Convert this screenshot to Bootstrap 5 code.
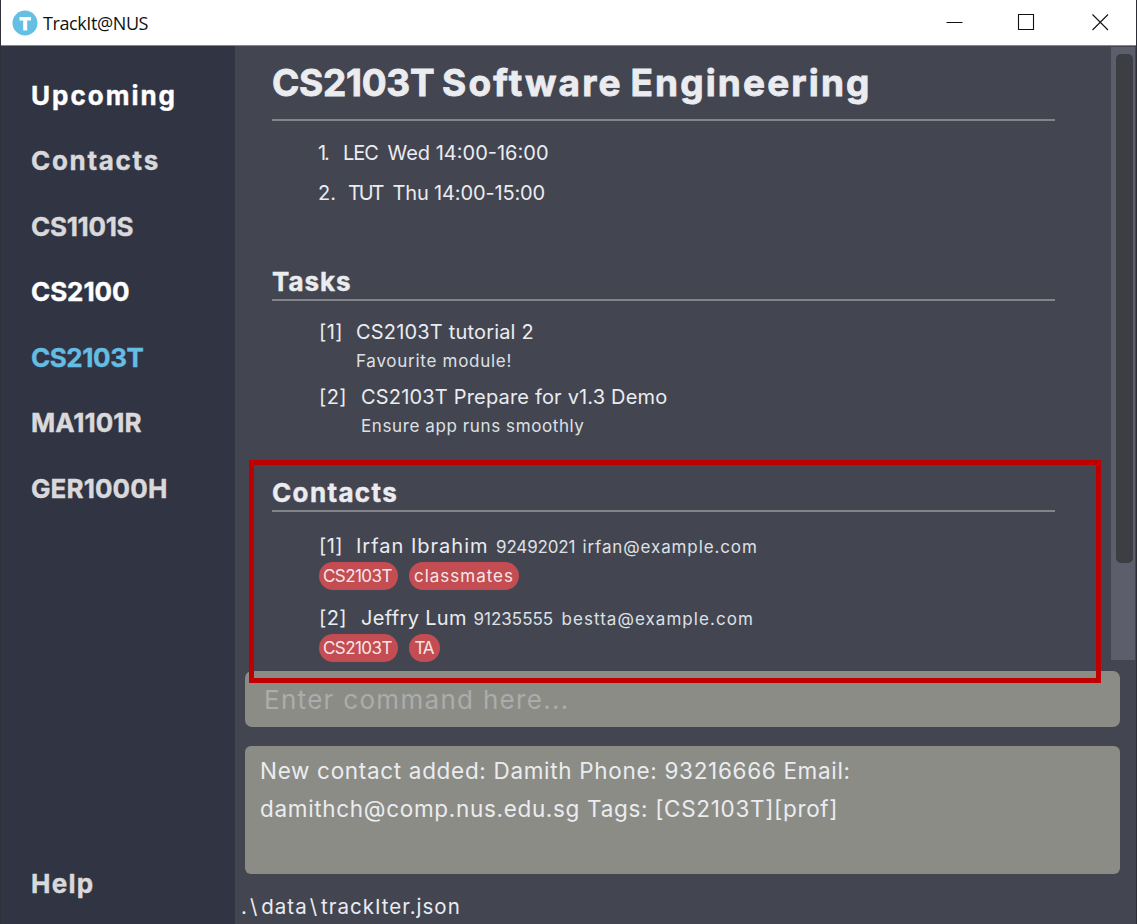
<!DOCTYPE html>
<html lang="en">
<head>
<meta charset="utf-8">
<title>TrackIt@NUS</title>
<link rel="stylesheet" href="https://cdn.jsdelivr.net/npm/bootstrap@5.3.0/dist/css/bootstrap.min.css">
<style>
  body { font-family: Inter, "Open Sans", sans-serif; font-size: 20px; line-height: 30px; color: #ebecf0; background: #434651; white-space: nowrap; }
  .win { height: 924px; border-left: 1px solid #30323b; border-right: 1px solid #2c2d36; }
  .titlebar { height: 46px; background: #fff; color: #111; border-bottom: 1px solid #85868c; padding-left: 11px; }
  .titlebar .app-name { font: 18px/30px "Open Sans", sans-serif; letter-spacing: -.4px; margin-left: 5px; }
  .side { width: 234px; background: #313442; padding: 16.5px 0 8px 30px; font-size: 26px; font-weight: 700; -webkit-text-stroke: .4px; }
  .side a { color: #d9d9db; text-decoration: none; display: block; height: 65.5px; line-height: 66px; }
  .side a.lit { color: #fff; }
  .side a.current { color: #64bde3; }
  .scroller { height: 614px; }
  .content-col { width: 783px; margin-left: 37px; }
  .rule { border-bottom: 2px solid #82848a; }
  h1.rule { font-size: 37px; font-weight: 700; line-height: 71px; height: 75px; padding-top: 1px; word-spacing: -1px; -webkit-text-stroke: .8px; }
  h2.rule { font-size: 26px; font-weight: 700; line-height: 35px; height: 37px; -webkit-text-stroke: .4px; }
  .lessons { padding: 12px 0 0 46px; height: 143px; }
  .lessons > div { height: 39.5px; line-height: 40px; }
  .entries { padding-left: 46px; }
  .task { height: 65px; position: static; }
  .minor { font-size: 17px; line-height: 28px; color: #dfe0e4; }
  .contact { height: 72px; }
  .idx1 { width: 38px; } .idx2 { width: 43px; } .num1 { width: 25px; } .num2 { width: 30px; } .kind { width: 44.5px; }
  .idx1, .idx2 { letter-spacing: .4px; padding-left: 1px; text-indent: 0; }
  .name1 { width: 140px; letter-spacing: 1px; } .name2 { width: 112.5px; letter-spacing: .34px; }
  .phone1 { width: 86.5px; letter-spacing: -.15px; } .phone2 { width: 88px; }
  .pill { height: 28px; border-radius: 14px; background: #c34d52; font-size: 17px; line-height: 29px; color: #f6e7e7; padding-left: 4px; }
  .pill-row { gap: 11px; margin-left: 1px; }
  .pill-code { width: 79px; letter-spacing: -.56px; }
  .pill-class { width: 110px; padding-left: 5px; letter-spacing: .99px; }
  .pill-ta { width: 31px; padding-left: 5.5px; letter-spacing: -1.3px; }
  .contact-line { height: 29px; line-height: 29px; margin-bottom: 1px; }
  .track { width: 24px; height: 613px; background: #5d5e6b; margin: 1px 1px 0 0; padding: 7px 2px 0 5px; }
  .thumb { height: 509px; border-radius: 5px; background: #3d3e43; }
  .panel { background: #8b8c86; width: 875px; margin-left: 10px; }
  .cmd { height: 56px; margin-top: 11px; border-radius: 7px; font-size: 26px; line-height: 57px; padding-left: 19px; color: #acacab; letter-spacing: 1.3px; }
  .result { height: 128px; margin-top: 19px; border-radius: 6px; font-size: 22.5px; line-height: 37.5px; padding: 6px 0 0 15px; }
  .path { font-size: 20.5px; padding: 18px 0 0 6px; letter-spacing: 1px; }
  .path .sep { margin: 0 3px 0 2px; }
  .highlight { position: absolute; left: 248px; top: 460px; width: 852px; height: 223px; border: 5px solid #c00000; }
  .t213 { letter-spacing: 2.13px; } .n30 { letter-spacing: -.3px; }
  .t220 { letter-spacing: 2px; } .t175 { letter-spacing: 1.7px; } .t147 { letter-spacing: 1.35px; } .t135 { letter-spacing: 1.3px; }
  .t109 { letter-spacing: 1.05px; } .t95 { letter-spacing: .95px; } .t92 { letter-spacing: .88px; } .t70 { letter-spacing: .68px; } .t73 { letter-spacing: .73px; }
  .t63 { letter-spacing: .6px; } .t15 { letter-spacing: .1px; } .t21 { letter-spacing: .18px; } .t8 { letter-spacing: 0; }
  .n8 { letter-spacing: -.08px; } .n24 { letter-spacing: -.3px; } .n15 { letter-spacing: -.15px; } .n53 { letter-spacing: -.45px; } .n117 { letter-spacing: -1.1px; } .n220 { letter-spacing: -2.1px; }
</style>
</head>
<body class="overflow-hidden">
<div class="win d-flex flex-column position-relative">
  <header class="titlebar d-flex align-items-center flex-shrink-0">
    <svg width="26" height="26" viewBox="0 0 26 26" class="flex-shrink-0"><circle cx="13" cy="13" r="12.5" fill="#64bfe3"/><path d="M7.500 7H19v3.500h-3.800v10h-4v-10H7.500z" fill="#fff"/></svg>
    <span class="app-name">TrackIt@NUS</span>
    <svg class="ms-auto flex-shrink-0" width="190" height="45" viewBox="946 0 190 45" fill="none" stroke="#111" stroke-width="1.1"><path d="M946.500 22.500h16M1018.500 14.500h15v15h-15zM1092.500 14.500l15.500 15.500M1108 14.500l-15.500 15.500"/></svg>
  </header>
  <div class="d-flex flex-grow-1">
    <nav class="side d-flex flex-column flex-shrink-0">
      <a class="lit t220">Upcoming</a>
      <a class="t175">Contacts</a>
      <a class="n24">CS1101S</a>
      <a class="lit n8">CS2100</a>
      <a class="current n53">CS2103T</a>
      <a class="t8">MA1101R</a>
      <a class="t15">GER1000H</a>
      <a class="mt-auto t135">Help</a>
    </nav>
    <main class="flex-grow-1">
      <div class="scroller d-flex justify-content-between">
        <div class="content-col">
          <h1 class="rule m-0"><span class="n30">CS2103T</span> <span class="t213">Software</span> <span class="t213">Engineering</span></h1>
          <div class="lessons">
            <div class="d-flex"><span class="num1 n220">1.</span><span class="kind n117">LEC</span><span>Wed 14:00-16:00</span></div>
            <div class="d-flex"><span class="num2">2.</span><span class="kind n220">TUT</span><span class="n15">Thu 14:00-15:00</span></div>
          </div>
          <section>
            <h2 class="rule m-0 t95">Tasks</h2>
            <div class="entries pt-3">
              <div class="task d-flex"><span class="idx1">[1]</span><div><div class="t21">CS2103T tutorial 2</div><div class="minor t73">Favourite module!</div></div></div>
              <div class="task d-flex"><span class="idx2">[2]</span><div><div class="t21">CS2103T Prepare for v1.3 Demo</div><div class="minor t63">Ensure app runs smoothly</div></div></div>
            </div>
          </section>
          <section class="contacts pt-4 mt-1">
            <h2 class="rule m-0 t147">Contacts</h2>
            <div class="entries pt-3 mt-1">
              <div class="contact">
                <div class="contact-line d-flex align-items-center"><span class="idx1">[1]</span><span class="name1">Irfan Ibrahim</span><span class="minor phone1">92492021</span><span class="minor t92">irfan@example.com</span></div>
                <div class="pill-row d-flex"><span class="pill pill-code">CS2103T</span><span class="pill pill-class">classmates</span></div>
              </div>
              <div class="contact">
                <div class="contact-line d-flex align-items-center"><span class="idx2">[2]</span><span class="name2">Jeffry Lum</span><span class="minor phone2">91235555</span><span class="minor t109">bestta@example.com</span></div>
                <div class="pill-row d-flex"><span class="pill pill-code">CS2103T</span><span class="pill pill-ta">TA</span></div>
              </div>
            </div>
          </section>
        </div>
        <div class="track"><div class="thumb"></div></div>
      </div>
      <div class="panel cmd">Enter command here...</div>
      <div class="panel result t70">New contact added: Damith Phone: 93216666 Email:<br>damithch@comp.nus.edu.sg Tags: [CS2103T][prof]</div>
      <div class="path">.<span class="sep">\</span>data<span class="sep">\</span>trackIter.json</div>
    </main>
  </div>
  <div class="highlight"></div>
</div>
<script src="https://cdn.jsdelivr.net/npm/bootstrap@5.3.0/dist/js/bootstrap.bundle.min.js"></script>
</body>
</html>
